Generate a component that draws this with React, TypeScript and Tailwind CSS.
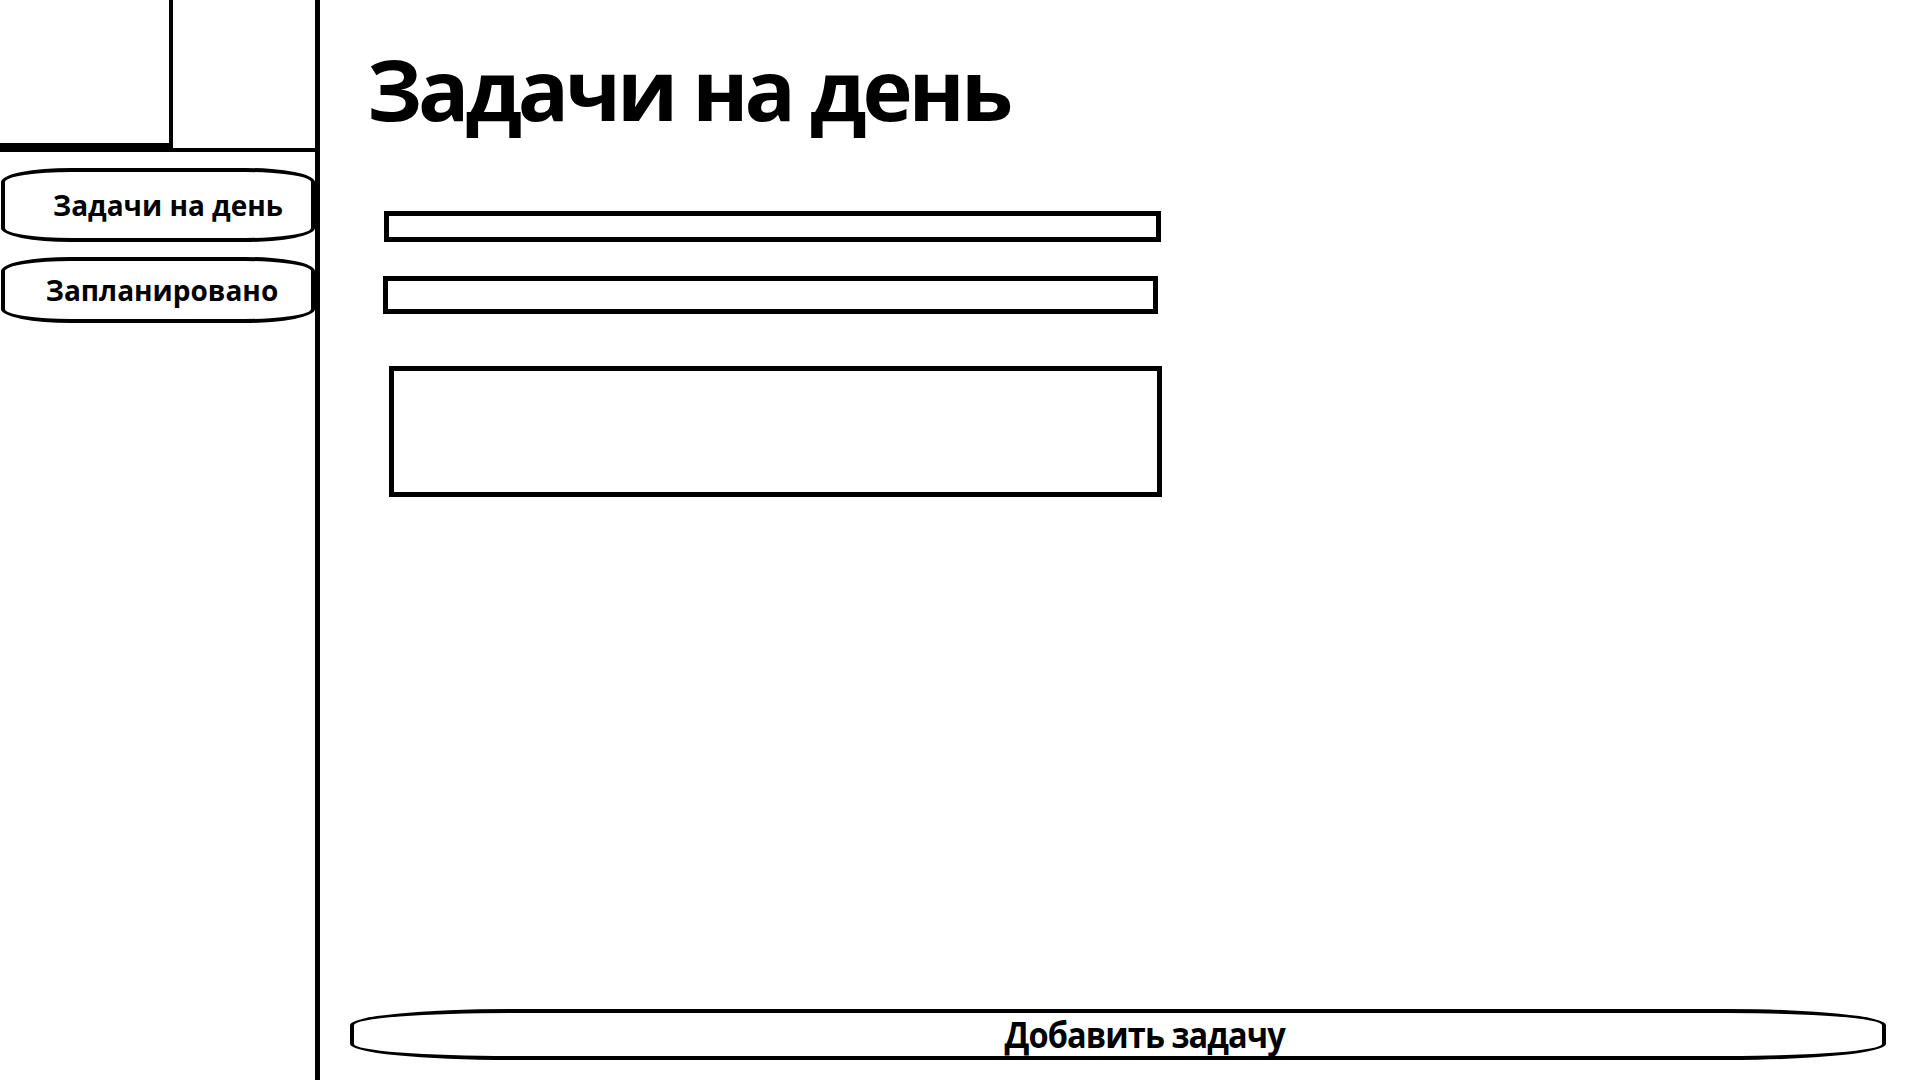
import React from "react";

const font = { fontFamily: '"Open Sans", "Noto Sans", sans-serif' };

const navItems = [
  { label: "Задачи на день", h: "h-[74px]", pad: "pl-[20px]" },
  { label: "Запланировано", h: "h-[66px]", pad: "pl-[8px]" },
];

export default function App() {
  return (
    <div className="flex h-screen w-full overflow-hidden bg-white text-black" style={font}>
      {/* sidebar */}
      <aside className="flex w-[320px] shrink-0 flex-col border-r-[5px] border-black">
        <div className="flex h-[152px]">
          <div className="w-[173px] border-r-4 border-b-[9px] border-black" />
          <div className="flex-1 border-b-4 border-black" />
        </div>
        <nav className="mt-[16px] flex flex-col gap-[15px] pl-[1px]">
          {navItems.map((item) => (
            <button
              key={item.label}
              className={`flex ${item.h} items-center justify-center rounded-[70px/14px] border-4 border-black bg-white ${item.pad} text-[28px] font-bold`}
            >
              {item.label}
            </button>
          ))}
        </nav>
      </aside>

      {/* main */}
      <main className="flex flex-1 flex-col pl-[30px] pr-[34px]">
        <h1 className="ml-[17px] mt-[38px] text-[85px] font-bold leading-[100px] tracking-[-4px]">
          Задачи на день
        </h1>

        <div className="ml-[34px] mt-[73px] flex flex-col">
          <input className="h-[31px] w-[777px] border-[5px] border-black outline-none" />
          <input className="-ml-[1px] mt-[34px] h-[38px] w-[775px] border-[5px] border-black outline-none" />
          <textarea className="ml-[5px] mt-[52px] h-[131px] w-[773px] resize-none border-[5px] border-black outline-none" />
        </div>

        <button className="mb-[20px] mt-auto flex h-[51px] w-full items-center justify-center rounded-[160px/16px] border-4 border-black bg-white pl-[54px]">
          <span className="inline-block origin-center scale-x-[0.93] text-[35px] font-bold leading-none tracking-[-1px]">
            Добавить задачу
          </span>
        </button>
      </main>
    </div>
  );
}
